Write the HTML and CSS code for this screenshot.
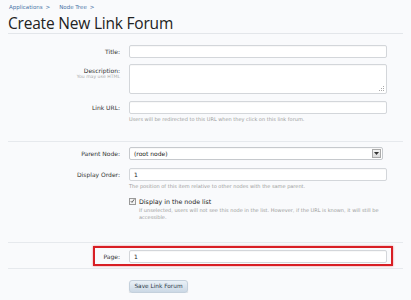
FILE: index.html
```html
<!DOCTYPE html>
<html>
<head>
<meta charset="utf-8">
<link rel="stylesheet" href="styles.css">
</head>
<body>
<div class="page">
  <div class="crumbs"><a>Applications</a><span class="sep">&gt;</span><a>Node Tree</a><span class="sep">&gt;</span></div>
  <h1 class="title">Create New Link Forum</h1>

  <div class="section s1">
    <div class="row r-title">
      <label class="lbl">Title:</label>
      <div class="ctl"><div class="input"></div></div>
    </div>
    <div class="row r-desc">
      <div class="lbl">Description:<div class="lbl-hint">You may use HTML</div></div>
      <div class="ctl"><div class="input textarea"><svg class="grip" width="5" height="5" viewBox="0 0 5 5"><rect x="4" y="0" width="1" height="1" fill="#aaa"/><rect x="2" y="2" width="1" height="1" fill="#aaa"/><rect x="4" y="2" width="1" height="1" fill="#aaa"/><rect x="0" y="4" width="1" height="1" fill="#aaa"/><rect x="2" y="4" width="1" height="1" fill="#aaa"/><rect x="4" y="4" width="1" height="1" fill="#aaa"/></svg></div></div>
    </div>
    <div class="row r-url">
      <label class="lbl">Link URL:</label>
      <div class="ctl"><div class="input"></div><div class="hint">Users will be redirected to this URL when they click on this link forum.</div></div>
    </div>
  </div>

  <div class="section s2">
    <div class="row r-parent">
      <label class="lbl">Parent Node:</label>
      <div class="ctl"><div class="input select"><span class="val">(root node)</span><span class="dd"><svg width="5" height="3" viewBox="0 0 5 3"><path d="M0 0h5L2.5 3z" fill="#333"/></svg></span></div></div>
    </div>
    <div class="row r-order">
      <label class="lbl">Display Order:</label>
      <div class="ctl"><div class="input"><span class="val">1</span></div><div class="hint">The position of this item relative to other nodes with the same parent.</div></div>
    </div>
    <div class="row r-check">
      <div class="lbl"></div>
      <div class="ctl">
        <div class="check"><span class="box"><svg width="6" height="6" viewBox="0 0 6 6"><path d="M1 3.2l1.4 1.5L5 1" fill="none" stroke="#444" stroke-width="1"/></svg></span><span class="check-text">Display in the node list</span></div>
        <div class="hint indent">If unselected, users will not see this node in the list. However, if the URL is known, it will still be accessible.</div>
      </div>
    </div>
  </div>

  <div class="section s3">
    <div class="highlight">
      <label class="lbl">Page:</label>
      <div class="ctl"><div class="input"><span class="val">1</span></div></div>
    </div>
  </div>

  <div class="actions">
    <button class="btn">Save Link Forum</button>
  </div>
</div>
</body>
</html>
```

FILE: styles.css
```css
html, body {
  margin: 0;
  padding: 0;
  background: #f9fafc;
}
body {
  font-family: "DejaVu Sans", Verdana, sans-serif;
  color: #333;
}
.page {
  padding: 3px 8px 0 8px;
}
.crumbs {
  font-size: 5.5px;
  line-height: 9px;
  height: 9px;
  padding-left: 1px;
  color: #4a76a8;
}
.crumbs a {
  color: #4a76a8;
}
.crumbs .sep {
  margin: 0 9px 0 3px;
  color: #4a76a8;
}
.title {
  font-family: "Open Sans", "DejaVu Sans", sans-serif;
  font-weight: normal;
  font-size: 15.5px;
  letter-spacing: -0.2px;
  line-height: 18px;
  margin: 2px 0 0 0;
  padding-bottom: 1px;
  color: #222;
  border-bottom: 1px solid #e3e6ea;
}
.section {
  border-bottom: 1px solid #e6e9ed;
}
.s1 {
  padding-top: 11px;
  box-sizing: border-box;
  height: 108px;
}
.s2 {
  padding-top: 5px;
  height: 101px;
  box-sizing: border-box;
}
.s3 {
  padding-top: 3px;
  height: 26px;
  box-sizing: border-box;
}
.row {
  display: grid;
  grid-template-columns: 112px 258px;
  column-gap: 9px;
}
.lbl {
  font-size: 6px;
  line-height: 13px;
  text-align: right;
  color: #333;
}
.lbl-hint {
  font-size: 4.6px;
  line-height: 6px;
  color: #aaa;
  margin-top: -3px;
}
.input {
  height: 13px;
  box-sizing: border-box;
  background: #fff;
  border: 1px solid #d3d6da;
  border-radius: 2px;
  box-shadow: inset 0 1px 1px rgba(0,0,0,0.03);
  position: relative;
  font-size: 6px;
  line-height: 11px;
}
.input .val {
  padding-left: 4px;
  color: #222;
}
.textarea {
  height: 30px;
}
.grip {
  position: absolute;
  right: 2px;
  bottom: 2px;
}
.r-title { margin-bottom: 6px; }
.r-desc { margin-bottom: 7px; }
.hint {
  font-size: 5px;
  line-height: 7px;
  margin-top: 2px;
  color: #9a9a9a;
}
.select {
  width: 254px;
  display: flex;
  align-items: center;
  justify-content: space-between;
  border-color: #c6c9cd;
}
.dd {
  width: 9px;
  height: 9px;
  box-sizing: border-box;
  margin-right: 1px;
  background: linear-gradient(#f4f4f4, #dcdcdc);
  border: 1px solid #aaa;
  display: flex;
  align-items: center;
  justify-content: center;
}
.r-parent { margin-bottom: 8px; }
.r-order { margin-bottom: 6px; }
.check {
  display: flex;
  align-items: center;
  height: 10px;
}
.box {
  width: 7px;
  height: 7px;
  box-sizing: border-box;
  border: 1px solid #999;
  background: #f3f3f3;
  display: flex;
  align-items: center;
  justify-content: center;
  margin-right: 3px;
}
.check-text {
  font-size: 6.3px;
  color: #222;
}
.indent {
  padding-left: 10px;
  margin-top: 1px;
}
.highlight {
  margin-left: 85px;
  width: 300px;
  box-sizing: border-box;
  height: 20px;
  border: 2px solid #d81e24;
  box-shadow: 0 0 2px rgba(216,30,36,0.5);
  display: grid;
  grid-template-columns: 25px 258px;
  column-gap: 9px;
  padding-top: 2px;
}
.actions {
  padding: 4px 0 0 121px;
}
.btn {
  font-family: "DejaVu Sans", Verdana, sans-serif;
  font-size: 5.8px;
  color: #2f3b48;
  width: 59px;
  height: 13px;
  padding: 0;
  border: 1px solid #c4d0dc;
  border-radius: 3px;
  background: linear-gradient(#eaf1f7, #cbd8e5);
  box-shadow: 0 1px 1px rgba(0,0,0,0.15);
}
```
